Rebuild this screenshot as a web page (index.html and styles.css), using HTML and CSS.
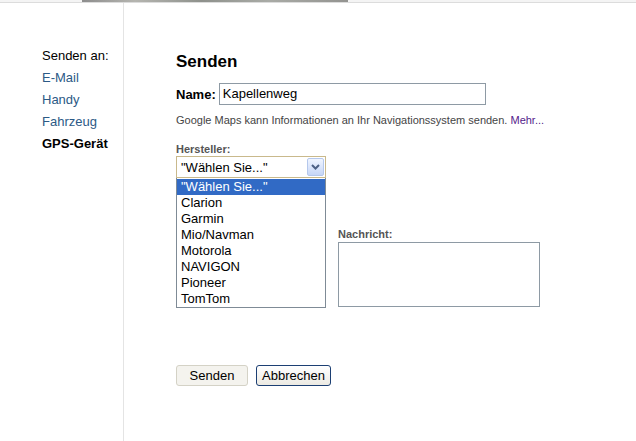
FILE: index.html
```html
<!DOCTYPE html>
<html lang="de">

<head>
    <meta charset="UTF-8">
    <title>Senden</title>
    <link rel="stylesheet" href="styles.css">
</head>

<body>

    <!-- Kartenrand oben -->
    <div class="topbar">
        <div class="map-strip"></div>
    </div>

    <div class="page">

        <!-- Seitenleiste -->
        <div class="sidebar">
            <div class="side-item">Senden an:</div>
            <a class="side-item side-link" href="#">E-Mail</a>
            <a class="side-item side-link" href="#">Handy</a>
            <a class="side-item side-link" href="#">Fahrzeug</a>
            <div class="side-item side-active">GPS-Gerät</div>
        </div>

        <!-- Formular -->
        <div class="main">
            <h1>Senden</h1>

            <div class="name-row">
                <span class="name-label">Name:</span>
                <div class="name-input">Kapellenweg</div>
            </div>

            <p class="hint">Google Maps kann Informationen an Ihr Navigationssystem senden. <a href="#">Mehr...</a></p>

            <div class="label">Hersteller:</div>
            <div class="select-wrap">
                <div class="select">
                    <span>"Wählen Sie..."</span>
                    <span class="select-btn">
                        <svg width="9" height="6" viewBox="0 0 9 6">
                            <path d="M1 1 L4.5 4.5 L8 1" fill="none" stroke="#4d6185" stroke-width="2"/>
                        </svg>
                    </span>
                </div>
                <ul class="options">
                    <li class="selected">"Wählen Sie..."</li>
                    <li>Clarion</li>
                    <li>Garmin</li>
                    <li>Mio/Navman</li>
                    <li>Motorola</li>
                    <li>NAVIGON</li>
                    <li>Pioneer</li>
                    <li>TomTom</li>
                </ul>
            </div>

            <div class="fields">
                <div class="field-left"></div>
                <div class="field-right">
                    <div class="label">Nachricht:</div>
                    <div class="textarea"></div>
                </div>
            </div>

            <div class="buttons">
                <button class="btn btn-disabled">Senden</button>
                <button class="btn btn-cancel">Abbrechen</button>
            </div>
        </div>

    </div>

</body>

</html>
```

FILE: styles.css
```css
body {
    margin: 0;
    background-color: #fff;
    font-family: "Liberation Sans", Arial, sans-serif;
    color: #000;
}

/* Kartenrand oben */
.topbar {
    height: 2px;
    border-bottom: 1px solid #dcdcdc;
    background-color: #f4f4f4;
}

.map-strip {
    margin-left: 82px;
    width: 266px;
    height: 2px;
    background: linear-gradient(90deg, #8d8d8d, #b5b5b0 20%, #8e918c 45%, #a9aba6 70%, #939390);
}

.page {
    display: flex;
    min-height: 438px;
}

/* Seitenleiste */
.sidebar {
    width: 81px;
    padding: 42px 0 0 42px;
    border-right: 1px solid #e4e4e4;
    display: flex;
    flex-direction: column;
}

.side-item {
    font-size: 13px;
    line-height: 22px;
    color: #000;
}

.side-link {
    color: #2c5a86;
    text-decoration: none;
}

.side-active {
    font-weight: bold;
}

/* Formular */
.main {
    padding-left: 52px;
}

h1 {
    font-size: 17px;
    line-height: 20px;
    margin: 49px 0 0 0;
}

.name-row {
    display: flex;
    align-items: center;
    gap: 3px;
    margin-top: 11px;
}

.name-label {
    font-size: 13px;
    font-weight: bold;
}

.name-input {
    width: 262px;
    height: 20px;
    border: 1px solid #8e9aa4;
    font-size: 13px;
    line-height: 20px;
    padding-left: 3px;
}

.hint {
    font-size: 11px;
    line-height: 14px;
    color: #444;
    margin: 8px 0 0 0;
}

.hint a {
    color: #551a8b;
    text-decoration: none;
}

.label {
    font-size: 11px;
    font-weight: bold;
    color: #555;
    line-height: 14px;
}

.main > .label {
    margin-top: 15px;
}

.select-wrap {
    position: relative;
    width: 150px;
}

.select {
    height: 20px;
    border: 1px solid #c9b98c;
    display: flex;
    align-items: center;
    justify-content: space-between;
    font-size: 13px;
    padding-left: 4px;
}

.select-btn {
    width: 15px;
    height: 16px;
    margin-right: 1px;
    border: 1px solid #b5c8ec;
    border-radius: 2px;
    background: linear-gradient(#f0f5ff, #c6d6f7);
    display: flex;
    align-items: center;
    justify-content: center;
}

/* Aufgeklappte Liste */
.options {
    position: absolute;
    top: 22px;
    left: 0;
    width: 148px;
    margin: 0;
    padding: 1px 0 0 0;
    list-style: none;
    border: 1px solid #7f8b96;
    border-top: none;
    background-color: #fff;
    z-index: 2;
}

.options li {
    font-size: 13px;
    line-height: 16px;
    padding-left: 4px;
}

.options .selected {
    background-color: #316ac5;
    color: #fff;
}

.fields {
    display: flex;
    gap: 12px;
    margin-top: 49px;
}

.field-left {
    width: 150px;
}

.textarea {
    width: 200px;
    height: 63px;
    border: 1px solid #8e9aa4;
    margin-top: 1px;
}

/* Tasten */
.buttons {
    display: flex;
    gap: 8px;
    margin-top: 58px;
}

.btn {
    font-family: "Liberation Sans", Arial, sans-serif;
    font-size: 13px;
    height: 21px;
    padding: 0;
    color: #000;
    border-radius: 3px;
}

.btn-disabled {
    width: 72px;
    border: 1px solid #d4d2c6;
    background-color: #f4f3ee;
}

.btn-cancel {
    width: 75px;
    border: 1px solid #1c3f73;
    background: linear-gradient(#fff, #eceae3);
}
```
